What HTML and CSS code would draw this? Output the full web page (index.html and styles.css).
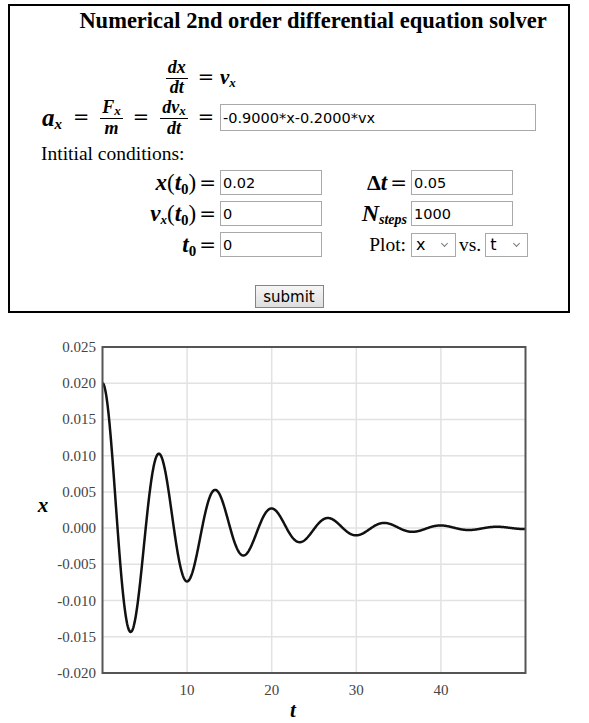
FILE: index.html
```html
<!DOCTYPE html>
<html lang="en">
<head>
    <meta charset="UTF-8">
    <meta name="viewport" content="width=device-width, initial-scale=1.0">
    <title>Numerical 2nd order differential equation solver</title>
    <link rel="stylesheet" href="styles.css">
</head>
<body>
    <form class="panel" onsubmit="return false">
        <h1 class="title">Numerical 2nd order differential equation solver</h1>

        <div class="eq-grid">
            <div class="lhs row-vel">
                <span class="frac"><span class="num">dx</span><span class="den">dt</span></span>
                <span class="op">=</span>
            </div>
            <div class="rhs"><span class="var">v<sub>x</sub></span></div>

            <div class="lhs row-acc">
                <span class="var big">a<sub>x</sub></span>
                <span class="op">=</span>
                <span class="frac"><span class="num">F<sub>x</sub></span><span class="den">m</span></span>
                <span class="op">=</span>
                <span class="frac"><span class="num">dv<sub>x</sub></span><span class="den">dt</span></span>
                <span class="op">=</span>
            </div>
            <div class="rhs"><input class="field wide" type="text" id="accel" value="-0.9000*x-0.2000*vx"></div>
        </div>

        <div class="ic-title">Intitial conditions:</div>

        <div class="ic-grid">
            <label class="lbl"><span class="var">x</span><span class="paren">(</span><span class="var">t</span><sub class="n">0</sub><span class="paren">)</span><span class="op">=</span></label>
            <input class="field" type="text" id="x0" value="0.02">
            <label class="lbl"><span class="delta">Δ</span><span class="var">t</span><span class="op">=</span></label>
            <input class="field" type="text" id="dt" value="0.05">

            <label class="lbl"><span class="var">v<sub>x</sub></span><span class="paren">(</span><span class="var">t</span><sub class="n">0</sub><span class="paren">)</span><span class="op">=</span></label>
            <input class="field" type="text" id="v0" value="0">
            <label class="lbl"><span class="var wide-n">N<sub>steps</sub></span></label>
            <input class="field" type="text" id="nsteps" value="1000">

            <label class="lbl"><span class="var">t</span><sub class="n">0</sub><span class="op">=</span></label>
            <input class="field" type="text" id="t0" value="0">
            <label class="lbl plain">Plot:</label>
            <div class="plot-pick">
                <span class="pick-wrap"><select class="pick pick-y" id="plotY"><option>x</option><option>vx</option><option>t</option></select></span>
                <span class="vs">vs.</span>
                <span class="pick-wrap"><select class="pick pick-x" id="plotX"><option>t</option><option>x</option><option>vx</option></select></span>
            </div>
        </div>

        <div class="actions">
            <button type="submit">submit</button>
        </div>
    </form>

    <svg class="chart" width="589" height="393" viewBox="0 0 589 393">
        <g id="grid"></g>
        <path id="curve" class="curve" d=""></path>
        <rect class="frame" x="102.5" y="17" width="423" height="326"></rect>
        <g id="labels"></g>
        <text class="axis-name" x="43" y="182">x</text>
        <text class="axis-name" x="293" y="387">t</text>
    </svg>

    <script>
        (function () {
            // plot area in svg coordinates
            const plotLeft = 102.5, plotRight = 525.5, plotTop = 17, plotBottom = 343;
            const tMax = 50, yMax = 0.025, yMin = -0.020;

            function px(t) { return plotLeft + t / tMax * (plotRight - plotLeft); }
            function py(v) { return plotTop + (yMax - v) / (yMax - yMin) * (plotBottom - plotTop); }

            function accel(x, vx) { return -0.9 * x - 0.2 * vx; }

            function solve(x, vx, dt, n) {
                const pts = [[0, x]];
                let t = 0;
                for (let i = 0; i < n; i++) {
                    const k1x = vx, k1v = accel(x, vx);
                    const k2x = vx + k1v * dt / 2, k2v = accel(x + k1x * dt / 2, vx + k1v * dt / 2);
                    const k3x = vx + k2v * dt / 2, k3v = accel(x + k2x * dt / 2, vx + k2v * dt / 2);
                    const k4x = vx + k3v * dt, k4v = accel(x + k3x * dt, vx + k3v * dt);
                    x += dt / 6 * (k1x + 2 * k2x + 2 * k3x + k4x);
                    vx += dt / 6 * (k1v + 2 * k2v + 2 * k3v + k4v);
                    t += dt;
                    pts.push([t, x]);
                }
                return pts;
            }

            const svgNS = 'http://www.w3.org/2000/svg';
            const grid = document.getElementById('grid');
            const labels = document.getElementById('labels');

            function add(parent, tag, attrs, text) {
                const el = document.createElementNS(svgNS, tag);
                for (const k in attrs) el.setAttribute(k, attrs[k]);
                if (text) el.textContent = text;
                parent.appendChild(el);
            }

            for (let i = 0; i <= 9; i++) {
                const v = yMax - i * 0.005;
                const y = py(v);
                add(grid, 'line', { x1: plotLeft, x2: plotRight, y1: y, y2: y, class: 'gridline' });
                add(labels, 'text', { x: 96, y: y + 5, class: 'tick tick-y' }, v.toFixed(3).replace('-0.000', '0.000'));
            }
            for (let t = 10; t < tMax; t += 10) {
                const x = px(t);
                add(grid, 'line', { x1: x, x2: x, y1: plotTop, y2: plotBottom, class: 'gridline' });
                add(labels, 'text', { x: x, y: 365, class: 'tick tick-x' }, String(t));
            }

            const pts = solve(0.02, 0, 0.05, 1000);
            document.getElementById('curve').setAttribute('d',
                pts.map((p, i) => (i ? 'L' : 'M') + px(p[0]).toFixed(2) + ' ' + py(p[1]).toFixed(2)).join(' '));
        })();
    </script>
</body>
</html>
```

FILE: styles.css
```css
body {
    margin: 0;
    background-color: white;
    font-family: "Liberation Serif", serif;
    color: #000;
}
.panel {
    display: block;
    width: 558px;
    margin: 4px 0 0 8px;
    border: 2px solid #000;
    padding: 0 0 3px 0;
}
.title {
    margin: 3px 0 0 0;
    padding-left: 48px;
    text-align: center;
    font-size: 22.5px;
    font-weight: bold;
    line-height: 24px;
}
.eq-grid {
    display: grid;
    grid-template-columns: 179px auto;
    grid-template-rows: 37px 35px;
    column-gap: 4px;
    row-gap: 4px;
    margin: 26px 0 0 27px;
    align-items: center;
}
.lhs {
    display: flex;
    align-items: center;
    justify-content: flex-end;
    white-space: nowrap;
    padding-right: 2px;
}
.rhs {
    display: flex;
    align-items: center;
}
.var, .frac {
    font-style: italic;
    font-weight: bold;
}
.var {
    font-size: 21px;
}
.lbl .var {
    font-size: 23px;
}
.var.big {
    font-size: 25px;
    margin-right: 1px;
}
.var sub, .num sub {
    font-size: 13px;
    line-height: 0;
    vertical-align: -3px;
}
.num sub {
    vertical-align: -2px;
}
.var.big sub {
    font-size: 15px;
}
.lbl .wide-n {
    font-size: 24px;
}
.lbl .wide-n sub {
    font-size: 14px;
}
sub.n {
    font-style: normal;
    font-weight: bold;
    font-size: 15px;
    line-height: 0;
    vertical-align: -4px;
}
.paren {
    font-size: 23px;
}
.delta {
    font-weight: bold;
    font-size: 22px;
}
.frac {
    display: inline-flex;
    flex-direction: column;
    align-items: center;
    font-size: 18px;
    line-height: 15px;
}
.num {
    padding: 0 2px 3px;
    border-bottom: 1px solid #000;
}
.den {
    padding-top: 2px;
}
.row-vel .den {
    padding-top: 1px;
}
.op {
    font-family: "DejaVu Serif", serif;
    font-size: 19.5px;
}
.row-acc .op {
    margin: 0 11px 0 10px;
}
.row-acc .op:last-child {
    margin-right: 0;
}
.row-vel .op {
    margin-left: 10px;
}
.field {
    box-sizing: border-box;
    width: 102px;
    height: 25px;
    border: 1px solid #a9a9a9;
    padding: 1px 2px;
    font-family: "DejaVu Sans", sans-serif;
    font-size: 14.5px;
    color: #000;
}
.field.wide {
    width: 316px;
    height: 27px;
}
.ic-title {
    margin: 9px 0 0 31px;
    font-size: 19.5px;
    line-height: 20px;
}
.ic-grid {
    display: grid;
    grid-template-columns: 179px 102px 81px 102px;
    grid-auto-rows: 25px;
    column-gap: 4px;
    row-gap: 6px;
    margin: 6px 0 0 27px;
    align-items: center;
}
.lbl {
    text-align: right;
    white-space: nowrap;
}
.lbl .op {
    margin-left: 3px;
    font-size: 20px;
}
.lbl.plain {
    font-size: 19.5px;
    padding-right: 1px;
}
.plot-pick {
    display: flex;
    align-items: center;
    white-space: nowrap;
}
.pick-wrap {
    position: relative;
    display: inline-block;
}
.pick-wrap::after {
    content: "";
    position: absolute;
    right: 9px;
    top: 8px;
    width: 4px;
    height: 4px;
    border-right: 1px solid #777;
    border-bottom: 1px solid #777;
    transform: rotate(45deg);
    pointer-events: none;
}
.pick {
    display: block;
    box-sizing: border-box;
    height: 24px;
    border: 1px solid #a9a9a9;
    border-radius: 0;
    padding: 0 4px;
    background: white;
    font-family: "DejaVu Sans", sans-serif;
    font-size: 16px;
    color: #000;
    appearance: none;
    -webkit-appearance: none;
}
.pick-y {
    width: 45px;
}
.pick-x {
    width: 43px;
}
.vs {
    font-size: 19.5px;
    margin: 0 4px 0 3px;
}
.actions {
    margin-top: 28px;
    text-align: center;
}
button {
    width: 69px;
    height: 23px;
    background: linear-gradient(#f6f6f6, #dedede);
    border: 1px solid #4a90e2;
    font-family: "DejaVu Sans", sans-serif;
    font-size: 15px;
    color: #000;
    padding: 0;
    vertical-align: top;
}
.chart {
    display: block;
    margin-top: 17px;
}
.gridline {
    stroke: #e2e2e2;
    stroke-width: 1.5;
}
.frame {
    fill: none;
    stroke: #555;
    stroke-width: 2;
}
.curve {
    fill: none;
    stroke: #111;
    stroke-width: 2.5;
    stroke-linejoin: round;
}
.tick {
    font-family: "Liberation Serif", serif;
    font-size: 15px;
    fill: #444;
}
.tick-y {
    text-anchor: end;
}
.tick-x {
    text-anchor: middle;
}
.axis-name {
    font-family: "Liberation Serif", serif;
    font-style: italic;
    font-weight: bold;
    font-size: 21px;
    text-anchor: middle;
}
```
